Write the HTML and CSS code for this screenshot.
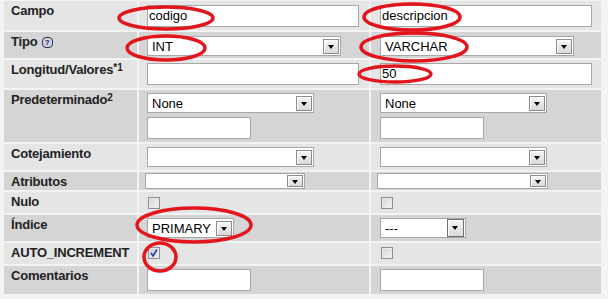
FILE: index.html
```html
<!DOCTYPE html>
<html lang="es">
<head>
  <meta charset="UTF-8">
  <meta name="viewport" content="width=device-width, initial-scale=1.0">
  <title>Campos de la tabla</title>
  <link rel="stylesheet" href="styles.css">
</head>
<body>
  <table class="campos">
    <colgroup>
      <col class="c-label">
      <col class="c-campo">
      <col class="c-campo">
    </colgroup>
    <tr class="r-campo odd">
      <th>Campo</th>
      <td class="pt4"><span class="txt w-big">codigo</span></td>
      <td class="pt4 alt"><span class="txt w-big">descripcion</span></td>
    </tr>
    <tr class="r-tipo even">
      <th>Tipo <span class="ayuda">?</span></th>
      <td class="pt4"><span class="sel w-tipo"><span class="val">INT</span><span class="btn"></span></span></td>
      <td class="pt4 alt"><span class="sel w-tipo"><span class="val">VARCHAR</span><span class="btn"></span></span></td>
    </tr>
    <tr class="r-long odd">
      <th>Longitud/Valores<sup>*1</sup></th>
      <td class="pt3"><span class="txt w-big"></span></td>
      <td class="pt3 alt"><span class="txt w-big">50</span></td>
    </tr>
    <tr class="r-pred even">
      <th>Predeterminado<sup>2</sup></th>
      <td class="pt3">
        <span class="sel w-med"><span class="val">None</span><span class="btn"></span></span>
        <span class="txt w-small gap4"></span>
      </td>
      <td class="pt3 alt">
        <span class="sel w-med"><span class="val">None</span><span class="btn"></span></span>
        <span class="txt w-small gap4"></span>
      </td>
    </tr>
    <tr class="r-cotej odd">
      <th>Cotejamiento</th>
      <td class="pt3"><span class="sel w-med"><span class="val"></span><span class="btn"></span></span></td>
      <td class="pt3 alt"><span class="sel w-med"><span class="val"></span><span class="btn"></span></span></td>
    </tr>
    <tr class="r-atrib even">
      <th>Atributos</th>
      <td class="pt1"><span class="sel sel-low w-atrib shift2"><span class="val"></span><span class="btn"></span></span></td>
      <td class="pt1 alt"><span class="sel sel-low w-atrib2 shift3"><span class="val"></span><span class="btn"></span></span></td>
    </tr>
    <tr class="r-nulo odd">
      <th>Nulo</th>
      <td class="pt5"><span class="check"></span></td>
      <td class="pt5 alt"><span class="check"></span></td>
    </tr>
    <tr class="r-indice even">
      <th>Índice</th>
      <td class="pt3"><span class="sel w-idx"><span class="val">PRIMARY</span><span class="btn"></span></span></td>
      <td class="pt3 alt"><span class="sel w-idx2"><span class="val">---</span><span class="btn btn-big"></span></span></td>
    </tr>
    <tr class="r-auto odd">
      <th>AUTO_INCREMENT</th>
      <td class="pt4">
        <span class="check checked">
          <svg width="10" height="10" viewBox="0 0 10 10"><path d="M2 5 L4 8 L8 1.5" fill="none" stroke="#2b3f9e" stroke-width="1.6"/></svg>
        </span>
      </td>
      <td class="pt4 alt"><span class="check"></span></td>
    </tr>
    <tr class="r-coment even">
      <th>Comentarios</th>
      <td class="pt3"><span class="txt w-small"></span></td>
      <td class="pt3 alt"><span class="txt w-small"></span></td>
    </tr>
  </table>

  <!-- marcas rojas dibujadas encima de la captura -->
  <svg class="marcas" width="608" height="299" viewBox="0 0 608 299">
    <g fill="none" stroke="#e2141c" stroke-width="3.5">
      <ellipse cx="166" cy="18" rx="47" ry="11"/>
      <ellipse cx="412" cy="17" rx="48" ry="13"/>
      <ellipse cx="166" cy="48" rx="39" ry="12"/>
      <ellipse cx="414" cy="47" rx="53" ry="14"/>
      <ellipse cx="395" cy="74" rx="36" ry="8"/>
      <ellipse cx="194" cy="225" rx="57" ry="17"/>
      <ellipse cx="160" cy="257" rx="16" ry="14"/>
    </g>
  </svg>
</body>
</html>
```

FILE: styles.css
```css
body {
  margin: 0;
  background-color: #f3f3f3;
  font-family: "Liberation Sans", Arial, sans-serif;
  position: relative;
  width: 608px;
  height: 299px;
  overflow: hidden;
}
.campos {
  table-layout: fixed;
  border-collapse: separate;
  border-spacing: 2px;
  width: 601px;
  margin: -1px 0 0 2px;
}
.c-label { width: 133px; }
.c-campo { width: 230px; }
.campos th,
.campos td {
  padding: 0 0 0 8px;
  vertical-align: top;
  text-align: left;
}
.campos td.alt { padding-left: 9px; }
.campos th {
  padding: 2px 0 0 7px;
  font-size: 13px;
  line-height: 15px;
  letter-spacing: -0.2px;
  font-weight: bold;
  color: #222;
  white-space: nowrap;
}
.campos th sup {
  font-size: 10px;
  vertical-align: 3px;
  line-height: 0;
  letter-spacing: 0;
}
.odd { background-color: #e5e5e5; }
.even { background-color: #d5d5d5; }

/* alturas de fila */
.r-campo { height: 29px; }
.r-tipo { height: 26px; }
.r-long { height: 28px; }
.r-pred { height: 52px; }
.r-cotej { height: 26px; }
.r-atrib { height: 18px; }
.r-nulo { height: 21px; }
.r-indice { height: 26px; }
.r-auto { height: 21px; }
.r-coment { height: 28px; }

.campos td.pt1 { padding-top: 1px; }
.campos td.pt3 { padding-top: 3px; }
.campos td.pt4 { padding-top: 4px; }
.campos td.pt5 { padding-top: 5px; }

.ayuda {
  display: inline-block;
  width: 9px;
  height: 9px;
  margin-left: 1px;
  border: 1px solid #333;
  border-radius: 4px;
  background-color: #cfd0f2;
  font-size: 8px;
  line-height: 9px;
  letter-spacing: 0;
  text-align: center;
  vertical-align: 1px;
  color: #222;
}

/* cajas de texto */
.txt {
  display: block;
  box-sizing: border-box;
  height: 22px;
  border: 1px solid #a7a7a7;
  background-color: #fff;
  padding: 0 1px;
  font-size: 13px;
  line-height: 20px;
  color: #000;
}
.w-big { width: 212px; }
.w-small { width: 104px; }
.gap4 { margin-top: 4px; }

/* listas desplegables */
.sel {
  display: flex;
  align-items: center;
  box-sizing: border-box;
  height: 20px;
  border: 1px solid #a7a7a7;
  background-color: #fff;
  padding: 0 1px 0 4px;
  font-size: 13px;
  color: #000;
}
.sel .val {
  flex: 1;
  white-space: nowrap;
}
.sel .btn {
  position: relative;
  box-sizing: border-box;
  width: 16px;
  height: 15px;
  border: 1px solid #8c8c8c;
  box-shadow: inset 1px 1px 0 #fff;
  background: linear-gradient(#f5f5f5, #dadada);
}
.sel .btn::after {
  content: "";
  position: absolute;
  left: 4px;
  top: 5px;
  border-left: 3.5px solid transparent;
  border-right: 3.5px solid transparent;
  border-top: 4px solid #000;
}
.sel .btn-big {
  height: 18px;
  width: 17px;
  border-color: #707070;
}
.sel .btn-big::after { top: 6px; }
.sel-low { height: 16px; }
.sel-low .btn { height: 12px; }
.sel-low .btn::after { top: 4px; }

.w-tipo { width: 194px; }
.w-med { width: 167px; }
.w-atrib { width: 160px; }
.w-atrib2 { width: 171px; }
.w-idx { width: 87px; }
.w-idx2 { width: 86px; }
.shift2 { margin-left: -2px; }
.shift3 { margin-left: -3px; }

/* casillas */
.check {
  display: flex;
  align-items: center;
  justify-content: center;
  box-sizing: border-box;
  width: 12px;
  height: 12px;
  margin-left: 1px;
  border: 1px solid #8e8e8e;
  background: linear-gradient(135deg, #d2d2d2, #f6f6f6);
  box-shadow: inset 0 0 0 1px #e8e8e8;
}
.check.checked {
  background: linear-gradient(135deg, #c3c9dc, #eef0f7);
}

.marcas {
  position: absolute;
  left: 0;
  top: 0;
  pointer-events: none;
}
```
